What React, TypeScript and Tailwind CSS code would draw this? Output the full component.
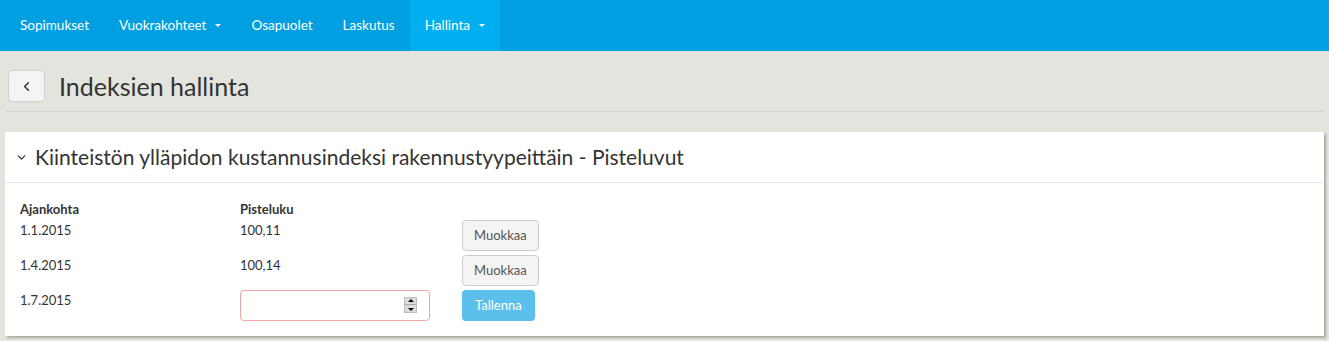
import { ChevronLeft, ChevronDown } from 'lucide-react';

const rows = [
  { date: '1.1.2015', value: '100,11' },
  { date: '1.4.2015', value: '100,14' },
];

function Caret() {
  return <span className="ml-[9px] inline-block w-0 h-0 border-x-[3px] border-x-transparent border-t-[3px] border-t-white align-middle" />;
}

export default function App() {
  const navItems = [
    { label: 'Sopimukset' },
    { label: 'Vuokrakohteet', caret: true },
    { label: 'Osapuolet' },
    { label: 'Laskutus' },
    { label: 'Hallinta', caret: true, active: true },
  ];

  return (
    <div className="min-h-[341px] bg-[#e4e4df] text-[#333] font-['Lato','Noto_Sans',sans-serif]">
      {/* yläpalkki */}
      <nav className="h-[51px] bg-[#009fe1] flex items-stretch pl-[5px]">
        {navItems.map(item => (
          <div
            key={item.label}
            className={`flex items-center px-[15px] text-white text-[13.5px] ${item.active ? 'bg-[#00aff0]' : ''}`}
          >
            {item.label}
            {item.caret && <Caret />}
          </div>
        ))}
      </nav>

      {/* otsikko */}
      <div className="mx-[5px] pt-[19px] pb-[9px] border-b border-[#d3d3ce] flex items-center">
        <button className="ml-[3px] w-[37px] h-[32px] rounded border border-[#cfcfcf] bg-[#f4f4f2] flex items-center justify-center text-[#333]">
          <ChevronLeft size={15} strokeWidth={2.5} />
        </button>
        <h1 className="ml-[14px] text-[25px] leading-[32px] text-[#333]">Indeksien hallinta</h1>
      </div>

      {/* paneeli */}
      <div className="mx-[5px] mt-[20px] bg-white shadow-[2px_2px_2px_rgba(0,0,0,0.25)]">
        <div className="h-[51px] border-b border-[#e6e6e6] flex items-center pl-[10px]">
          <ChevronDown size={13} strokeWidth={2.5} className="text-[#333]" />
          <span className="ml-[7px] text-[21px]">Kiinteistön ylläpidon kustannusindeksi rakennustyypeittäin - Pisteluvut</span>
        </div>
        <div className="pl-[15px] pt-[17px] pb-[15px] text-[13px]">
          <div className="grid grid-cols-[220px_222px_auto] items-start">
            <div className="font-bold h-[20px] leading-[18px]">Ajankohta</div>
            <div className="font-bold h-[20px] leading-[18px]">Pisteluku</div>
            <div />
            {rows.map(r => (
              <div key={r.date} className="contents">
                <div className="h-[35px] pt-[1px] leading-[18px]">{r.date}</div>
                <div className="h-[35px] pt-[1px] leading-[18px]">{r.value}</div>
                <div className="h-[35px]">
                  <button className="h-[31px] px-[11px] rounded border border-[#cccccc] bg-[#f4f4f4] text-[#555] text-[13px]">Muokkaa</button>
                </div>
              </div>
            ))}
            <div className="h-[31px] pt-[1px] leading-[18px]">1.7.2015</div>
            <div className="relative w-[190px] h-[31px]">
              <input type="text" className="w-full h-full rounded border border-[#f5a3a3] outline-none px-2" />
              <div className="absolute right-[13px] top-[7px] w-[13px] h-[16px] bg-[#dcdcdc] border border-[#bdbdbd] flex flex-col items-center justify-around">
                <span className="w-0 h-0 border-x-[3px] border-x-transparent border-b-[3px] border-b-black" />
                <span className="w-full h-px bg-[#a9a9a9]" />
                <span className="w-0 h-0 border-x-[3px] border-x-transparent border-t-[3px] border-t-black" />
              </div>
            </div>
            <div>
              <button className="h-[31px] px-[13px] rounded bg-[#5bc0eb] text-white text-[13px]">Tallenna</button>
            </div>
          </div>
        </div>
      </div>
    </div>
  );
}
